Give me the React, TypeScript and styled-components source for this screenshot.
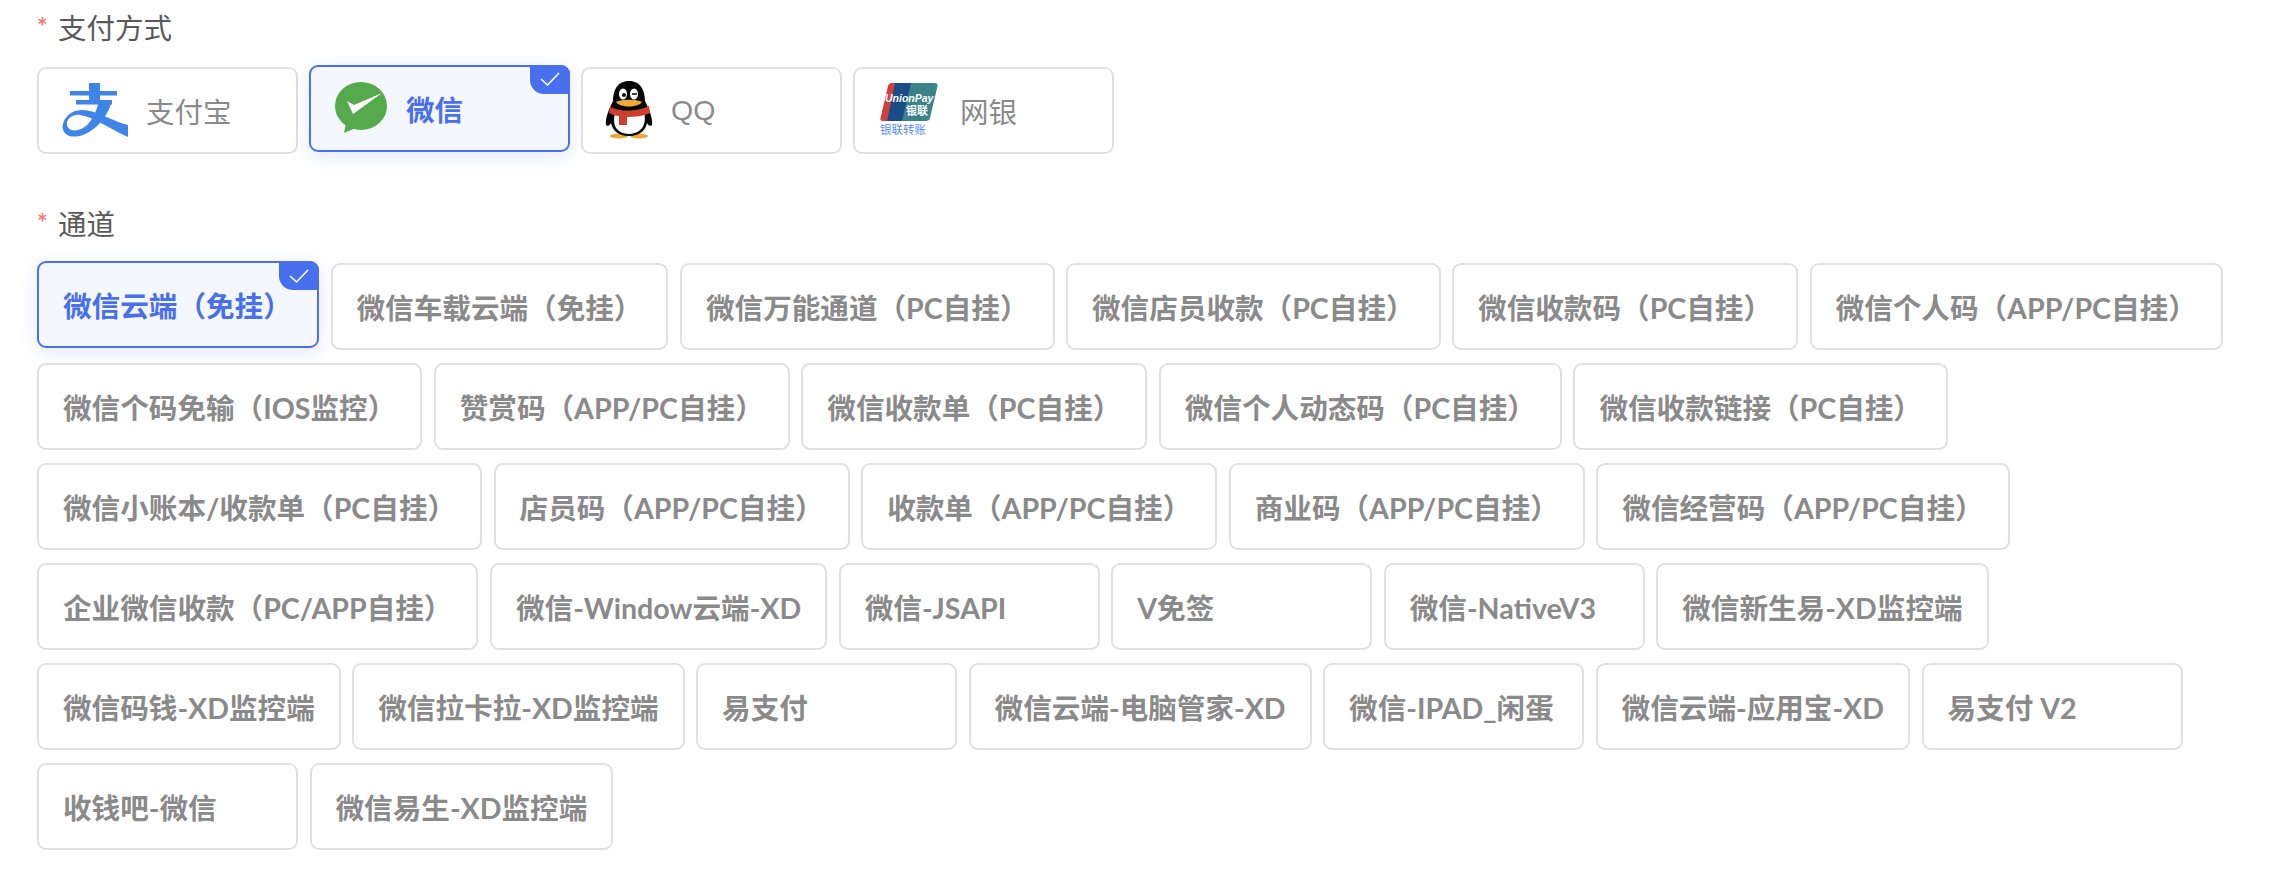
import React from 'react';
import styled, { createGlobalStyle } from 'styled-components';

const GlobalStyle = createGlobalStyle`
  html, body {
    margin: 0;
    padding: 0;
    background: #fff;
    font-family: Lato, "Noto Sans CJK SC", sans-serif;
  }
`;

const Page = styled.div`
  padding: 7px 8px 0 37px;
`;

const Section = styled.section`
  margin-bottom: 50px;
`;

const Label = styled.div`
  display: flex;
  align-items: center;
  height: 38px;
  margin-bottom: 21.5px;
  font-size: 28.5px;
  color: #595959;
`;

const Required = styled.span`
  width: 21px;
  font-size: 25px;
  font-weight: 700;
  color: #ee7a7a;
  line-height: 1;
`;

const Options = styled.div`
  display: flex;
  flex-wrap: wrap;
  gap: 13px 11.5px;
`;

const Card = styled.div<{ $active?: boolean }>`
  position: relative;
  box-sizing: border-box;
  display: flex;
  align-items: center;
  min-width: 261px;
  height: 87px;
  padding: 0 24px;
  border: 2px solid ${({ $active }) => ($active ? '#4870ee' : '#e0e0e0')};
  border-radius: 9px;
  background: ${({ $active }) => ($active ? '#f5f7ff' : '#fff')};
  color: ${({ $active }) => ($active ? '#4870ee' : '#8a8a8a')};
  font-size: 28.6px;
  font-weight: 700;
  white-space: nowrap;
  transform: ${({ $active }) => ($active ? 'translateY(-2px)' : 'none')};
  box-shadow: ${({ $active }) => ($active ? '0 4px 20px rgba(72, 112, 238, 0.16)' : 'none')};
`;

const ChannelCard = styled(Card)`
  &:first-child {
    min-width: 282px;
  }
`;

const PayCard = styled(Card)`
  gap: 18px;
  padding: 0 22px;
  min-width: 260.5px;
  font-size: 28.5px;
  font-family: "Liberation Sans", "Noto Sans CJK SC", sans-serif;
  font-weight: ${({ $active }) => ($active ? 700 : 400)};
`;

const Corner = styled.span`
  position: absolute;
  top: -2px;
  right: -2px;
  display: flex;
  align-items: center;
  justify-content: center;
  width: 40px;
  height: 29px;
  border-radius: 0 9px 0 14px;
  background: #4870ee;
`;

const Check = () => (
  <svg width="22" height="16" viewBox="0 0 22 16" fill="none">
    <path d="M2 8l6.5 6L20 2" stroke="#fff" strokeWidth="1.6" />
  </svg>
);

const AlipayLogo = () => (
  <svg width="67" height="56" viewBox="-1 -1 67 56">
    <g fill="#3f85e8">
      <rect x="27" y="0" width="11" height="10" />
      <rect x="8" y="8" width="47" height="4.500" />
      <rect x="14" y="17" width="36" height="4.500" />
      <rect x="27" y="10" width="11" height="8" />
      <path d="M36 21 L49 21 C45 33 36 46 21 52 C12 55 4 54 1 47 C-1 38 7 27 20 27 C34 27 50 38 66 42 L66 54 C50 47 32 34 18 32 C11 31 4 36 5 42 C6 48 14 49 21 45 C29 40 34 30 36 21 Z" />
    </g>
  </svg>
);

const WechatLogo = () => (
  <svg width="55" height="52" viewBox="-2 0 55 52">
    <ellipse cx="26" cy="24" rx="26" ry="24" fill="#55ab4c" />
    <path d="M11 41 L9 51 L21 46 Z" fill="#55ab4c" />
    <path d="M12 19 L19 23 L47 11 L18 32 Z" fill="#fff" />
  </svg>
);

const QQLogo = () => (
  <svg width="48" height="58" viewBox="0 0 48 58">
    <ellipse cx="14" cy="55" rx="9" ry="2.600" fill="#e9a93c" />
    <ellipse cx="34" cy="55" rx="9" ry="2.600" fill="#e9a93c" />
    <path d="M24 0 C36 0 40 10 40 20 C44 28 48 37 47 44 C45 46 43 44 42 42 C41 48 36 55 24 55 C12 55 7 48 6 42 C5 44 3 46 1 44 C0 37 4 28 8 20 C8 10 12 0 24 0 Z" fill="#060606" />
    <path d="M10 32 C16 35 32 35 39 31 C41 38 41 52 24 53 C8 52 8 40 10 32 Z" fill="#fff" />
    <path d="M5 26 C16 31 32 31 44 25 L45 32 C38 35 30 36 22 36 L22 44 L14 44 L14 35 C11 35 8 34 4 32 Z" fill="#cf3f30" />
    <ellipse cx="18" cy="13" rx="4" ry="5.500" fill="#fff" />
    <ellipse cx="29" cy="13" rx="4" ry="5.500" fill="#fff" />
    <circle cx="19" cy="14" r="2" fill="#111" />
    <path d="M27 13 L32 13" stroke="#111" strokeWidth="1.600" />
    <path d="M11 21 C16 18 32 18 37 21 C33 27 15 27 11 21 Z" fill="#eda93a" />
  </svg>
);

const UnionPayLogo = () => (
  <svg width="65" height="56" viewBox="-3 0 65 56">
    <path d="M8 4 C8.500 2 10 1 12 1 L26 1 L16 39 L3 39 C1 39 0 38 0.500 36 Z" fill="#d0413b" />
    <path d="M15 1 L38 1 L29 39 L7 39 Z" fill="#1b4c8a" />
    <path d="M31 1 L54 1 C57 1 58 2 57.500 4 L50 36 C49.500 38 48 39 46 39 L22 39 Z" fill="#3a8388" />
    <text x="5" y="20" fontSize="10.500" fontStyle="italic" fontWeight="700" fill="#fff" fontFamily="Liberation Sans, sans-serif">UnionPay</text>
    <text x="26" y="33" fontSize="11" fontWeight="700" fill="#fff" fontFamily="Noto Sans CJK SC, sans-serif">银联</text>
    <text x="0" y="52" fontSize="11.500" fill="#5b8def" fontFamily="Noto Sans CJK SC, sans-serif">银联转账</text>
  </svg>
);

const methods = [
  { name: '支付宝', logo: <AlipayLogo /> },
  { name: '微信', logo: <WechatLogo />, active: true },
  { name: 'QQ', logo: <QQLogo /> },
  { name: '网银', logo: <UnionPayLogo /> },
];

const channels = [
  '微信云端（免挂）',
  '微信车载云端（免挂）',
  '微信万能通道（PC自挂）',
  '微信店员收款（PC自挂）',
  '微信收款码（PC自挂）',
  '微信个人码（APP/PC自挂）',
  '微信个码免输（IOS监控）',
  '赞赏码（APP/PC自挂）',
  '微信收款单（PC自挂）',
  '微信个人动态码（PC自挂）',
  '微信收款链接（PC自挂）',
  '微信小账本/收款单（PC自挂）',
  '店员码（APP/PC自挂）',
  '收款单（APP/PC自挂）',
  '商业码（APP/PC自挂）',
  '微信经营码（APP/PC自挂）',
  '企业微信收款（PC/APP自挂）',
  '微信-Window云端-XD',
  '微信-JSAPI',
  'V免签',
  '微信-NativeV3',
  '微信新生易-XD监控端',
  '微信码钱-XD监控端',
  '微信拉卡拉-XD监控端',
  '易支付',
  '微信云端-电脑管家-XD',
  '微信-IPAD_闲蛋',
  '微信云端-应用宝-XD',
  '易支付 V2',
  '收钱吧-微信',
  '微信易生-XD监控端',
];

export default function App(): React.ReactElement {
  return (
    <Page>
      <GlobalStyle />
      <Section>
        <Label>
          <Required>*</Required>支付方式
        </Label>
        <Options>
          {methods.map(({ name, logo, active }) => (
            <PayCard key={name} $active={active}>
              {logo}
              {name}
              {active && (
                <Corner>
                  <Check />
                </Corner>
              )}
            </PayCard>
          ))}
        </Options>
      </Section>
      <Section>
        <Label>
          <Required>*</Required>通道
        </Label>
        <Options>
          {channels.map((name, i) => (
            <ChannelCard key={name} $active={i === 0}>
              {name}
              {i === 0 && (
                <Corner>
                  <Check />
                </Corner>
              )}
            </ChannelCard>
          ))}
        </Options>
      </Section>
    </Page>
  );
}
